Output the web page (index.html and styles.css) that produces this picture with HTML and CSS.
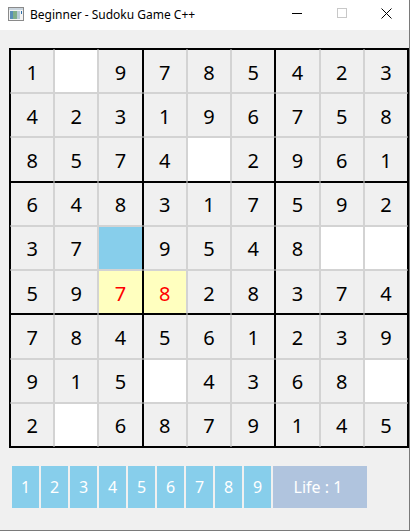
FILE: index.html
```html
<!DOCTYPE html>
<html>
<head>
<meta charset="utf-8">
<title>Beginner - Sudoku Game C++</title>
<link rel="stylesheet" href="styles.css">
</head>
<body>
<div class="window">
  <div class="titlebar">
    <svg class="app-icon" width="16" height="14" viewBox="0 0 16 14">
      <rect x="0.5" y="0.5" width="15" height="13" fill="#f4f4f4" stroke="#8a8a8a"/>
      <rect x="1" y="1" width="14" height="2" fill="#c9d4dd"/>
      <rect x="2" y="4" width="3" height="8" fill="#5a8fb8"/>
      <rect x="5" y="4" width="4" height="8" fill="#7fae8a"/>
      <rect x="9" y="4" width="3" height="8" fill="#b7cbd8"/>
      <rect x="13" y="4" width="1" height="3" fill="#2f6fa8"/>
    </svg>
    <span class="title">Beginner - Sudoku Game C++</span>
    <div class="controls">
      <div class="ctl"><svg width="10" height="10" viewBox="0 0 10 10"><path d="M0 5.5H10" stroke="#000" stroke-width="1"/></svg></div>
      <div class="ctl"><svg width="10" height="10" viewBox="0 0 10 10"><rect x="0.5" y="0.5" width="9" height="9" fill="none" stroke="#c8c8c8"/></svg></div>
      <div class="ctl"><svg width="11" height="11" viewBox="0 0 11 11"><path d="M0.5 0.5L10.5 10.5M10.5 0.5L0.5 10.5" stroke="#000" stroke-width="1"/></svg></div>
    </div>
  </div>
  <div class="content">
    <div class="board">
      <div class="row"><div class="cell">1</div><div class="cell empty"></div><div class="cell">9</div><div class="cell">7</div><div class="cell">8</div><div class="cell">5</div><div class="cell">4</div><div class="cell">2</div><div class="cell">3</div></div>
      <div class="row"><div class="cell">4</div><div class="cell">2</div><div class="cell">3</div><div class="cell">1</div><div class="cell">9</div><div class="cell">6</div><div class="cell">7</div><div class="cell">5</div><div class="cell">8</div></div>
      <div class="row"><div class="cell">8</div><div class="cell">5</div><div class="cell">7</div><div class="cell">4</div><div class="cell empty"></div><div class="cell">2</div><div class="cell">9</div><div class="cell">6</div><div class="cell">1</div></div>
      <div class="row"><div class="cell">6</div><div class="cell">4</div><div class="cell">8</div><div class="cell">3</div><div class="cell">1</div><div class="cell">7</div><div class="cell">5</div><div class="cell">9</div><div class="cell">2</div></div>
      <div class="row"><div class="cell">3</div><div class="cell">7</div><div class="cell selected"></div><div class="cell">9</div><div class="cell">5</div><div class="cell">4</div><div class="cell">8</div><div class="cell empty"></div><div class="cell empty"></div></div>
      <div class="row"><div class="cell">5</div><div class="cell">9</div><div class="cell conflict">7</div><div class="cell conflict">8</div><div class="cell">2</div><div class="cell">8</div><div class="cell">3</div><div class="cell">7</div><div class="cell">4</div></div>
      <div class="row"><div class="cell">7</div><div class="cell">8</div><div class="cell">4</div><div class="cell">5</div><div class="cell">6</div><div class="cell">1</div><div class="cell">2</div><div class="cell">3</div><div class="cell">9</div></div>
      <div class="row"><div class="cell">9</div><div class="cell">1</div><div class="cell">5</div><div class="cell empty"></div><div class="cell">4</div><div class="cell">3</div><div class="cell">6</div><div class="cell">8</div><div class="cell empty"></div></div>
      <div class="row"><div class="cell">2</div><div class="cell empty"></div><div class="cell">6</div><div class="cell">8</div><div class="cell">7</div><div class="cell">9</div><div class="cell">1</div><div class="cell">4</div><div class="cell">5</div></div>
    </div>
    <div class="pad">
      <div class="key">1</div><div class="key">2</div><div class="key">3</div><div class="key">4</div><div class="key">5</div><div class="key">6</div><div class="key">7</div><div class="key">8</div><div class="key">9</div>
      <div class="life">Life : 1</div>
    </div>
  </div>
</div>
</body>
</html>
```

FILE: styles.css
```css
html, body {
  margin: 0;
  padding: 0;
  background: #ffffff;
}

body {
  width: 412px;
  height: 531px;
  overflow: hidden;
  font-family: "Noto Sans", "DejaVu Sans", sans-serif;
}

.window {
  width: 410px;
  height: 531px;
  box-sizing: border-box;
  border-right: 1px solid #7a7a7a;
  border-bottom: 1px solid #7a7a7a;
  background: #f0f0f0;
  display: flex;
  flex-direction: column;
}

.titlebar {
  height: 30px;
  flex: none;
  background: #ffffff;
  display: flex;
  align-items: center;
}

.app-icon {
  margin-left: 8px;
  margin-top: -2px;
  flex: none;
}

.title {
  margin-left: 6px;
  font-size: 12px;
  color: #000;
  white-space: nowrap;
  margin-top: -1px;
}

.controls {
  margin-left: auto;
  display: flex;
  height: 100%;
}

.ctl {
  width: 45px;
  height: 100%;
  display: flex;
  align-items: center;
  justify-content: center;
  padding-top: 0;
  margin-top: -2px;
}

.content {
  padding: 18px 0 0 9px;
}

.board {
  width: 400px;
  height: 400px;
  box-sizing: border-box;
  border: 1px solid #000;
  display: flex;
  flex-direction: column;
}

.row {
  flex: 1;
  display: flex;
}

.cell {
  flex: 1;
  box-sizing: border-box;
  border: 1px solid #d3d3d3;
  background: #f0f0f0;
  display: flex;
  align-items: center;
  justify-content: center;
  font-size: 20px;
  color: #000;
  padding-top: 2px;
}

.row:nth-child(3n+1) .cell { border-top-color: #000; }
.row:nth-child(3n) .cell { border-bottom-color: #000; }
.cell:nth-child(3n+1) { border-left-color: #000; }
.cell:nth-child(3n) { border-right-color: #000; }

.cell.empty { background: #ffffff; }
.cell.selected { background: #87ceeb; }
.cell.conflict { background: #ffffbf; color: #ff0000; }

.pad {
  margin-top: 18px;
  margin-left: 3px;
  display: flex;
  gap: 2px;
  height: 42px;
}

.key, .life {
  display: flex;
  align-items: center;
  justify-content: center;
  color: #ffffff;
  font-size: 16px;
}

.key {
  width: 27px;
  background: #87ceeb;
}

.life {
  width: 94px;
  background: #b0c4de;
  padding-right: 4px;
  box-sizing: border-box;
}
```
